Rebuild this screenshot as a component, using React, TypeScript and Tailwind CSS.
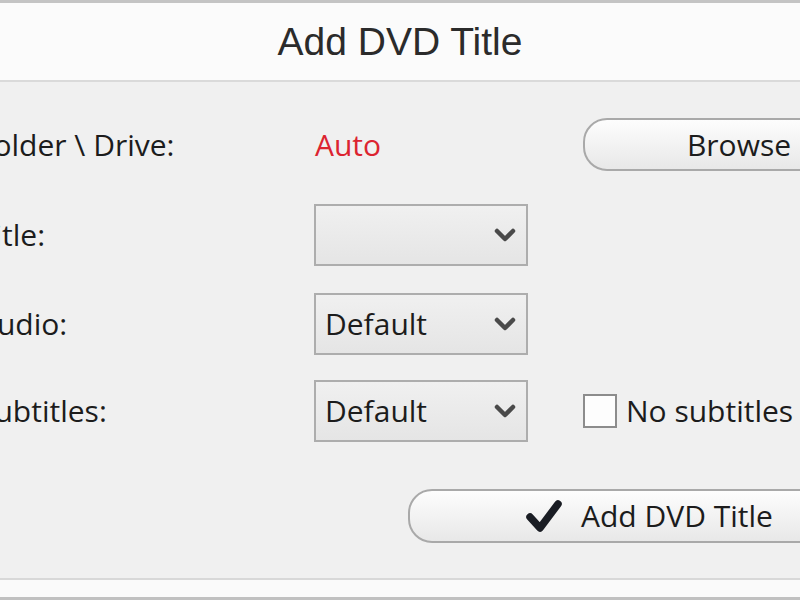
import React from "react";

const Chevron = () => (
  <svg width="22" height="16" viewBox="0 0 22 16" className="shrink-0">
    <polyline points="3,4 11,12 19,4" fill="none" stroke="#4a4a4a" strokeWidth="4.5" strokeLinecap="round" strokeLinejoin="round" />
  </svg>
);

const Dropdown = ({ value }: { value?: string }) => (
  <div className="w-[214px] h-[62px] shrink-0 border-2 border-[#adadad] bg-gradient-to-b from-[#f0f0f0] to-[#e5e5e5] flex items-center pl-[9px] pr-[10px]">
    <span className="flex-1 text-[30px] text-[#1c1c1c] leading-none">{value ?? ""}</span>
    <Chevron />
  </div>
);

const Label = ({ children }: { children: React.ReactNode }) => (
  <div className="w-[336px] ml-[-22px] shrink-0 text-[30px] text-[#1c1c1c] leading-none whitespace-nowrap">{children}</div>
);

export default function App() {
  return (
    <div className="w-[800px] h-[600px] flex flex-col overflow-hidden" style={{ fontFamily: '"Open Sans", "Noto Sans", sans-serif' }}>
      <div className="h-[3px] bg-[#c4c4c4] shrink-0" />
      <div className="h-[77px] bg-[#fbfbfb] shrink-0 flex items-center justify-center">
        <span className="text-[39px] text-[#2b2b2b] leading-none" style={{ fontFamily: '"Liberation Sans", Arial, sans-serif' }}>Add DVD Title</span>
      </div>
      <div className="h-[2px] bg-[#dadada] shrink-0" />
      <div className="flex-1 bg-[#f0f0f0] overflow-hidden flex flex-col pt-[36px]">
        <div className="h-[53px] flex items-center shrink-0">
          <Label>Folder \ Drive:</Label>
          <div className="w-[214px] shrink-0 pl-[1px] text-[30px] text-[#dc2430] leading-none">Auto</div>
          <button className="ml-[55px] w-[312px] shrink-0 h-[53px] rounded-[24px] border-2 border-[#a9a9a9] bg-gradient-to-b from-[#fdfdfd] to-[#e8e8e8] text-[30px] text-[#1c1c1c] leading-none flex items-center justify-center">
            Browse
          </button>
        </div>
        <div className="h-[62px] mt-[33px] flex items-center shrink-0">
          <Label>Title:</Label>
          <Dropdown />
        </div>
        <div className="h-[62px] mt-[27px] flex items-center shrink-0">
          <Label>Audio:</Label>
          <Dropdown value="Default" />
        </div>
        <div className="h-[62px] mt-[25px] flex items-center shrink-0">
          <Label>Subtitles:</Label>
          <Dropdown value="Default" />
          <div className="ml-[55px] flex items-center gap-[9px] shrink-0">
            <div className="w-[34px] h-[34px] border-2 border-[#8c8c8c] bg-[#fdfdfd]" />
            <span className="text-[30px] text-[#1c1c1c] leading-none whitespace-nowrap">No subtitles</span>
          </div>
        </div>
        <div className="h-[54px] mt-[47px] flex shrink-0">
          <button className="ml-[408px] w-[482px] shrink-0 h-[54px] rounded-[24px] border-2 border-[#a9a9a9] bg-gradient-to-b from-[#fdfdfd] to-[#e8e8e8] text-[30px] text-[#1c1c1c] leading-none flex items-center justify-center gap-[18px]">
            <svg width="38" height="36" viewBox="0 0 38 36">
              <polyline points="5,19 15,30 33,6" fill="none" stroke="#1a1d24" strokeWidth="7.5" strokeLinecap="round" strokeLinejoin="round" />
            </svg>
            <span>Add DVD Title</span>
          </button>
        </div>
      </div>
      <div className="h-[2px] bg-[#d8d8d8] shrink-0" />
      <div className="h-[17px] bg-[#fafafa] shrink-0" />
      <div className="h-[3px] bg-[#c0c0c0] shrink-0" />
    </div>
  );
}
